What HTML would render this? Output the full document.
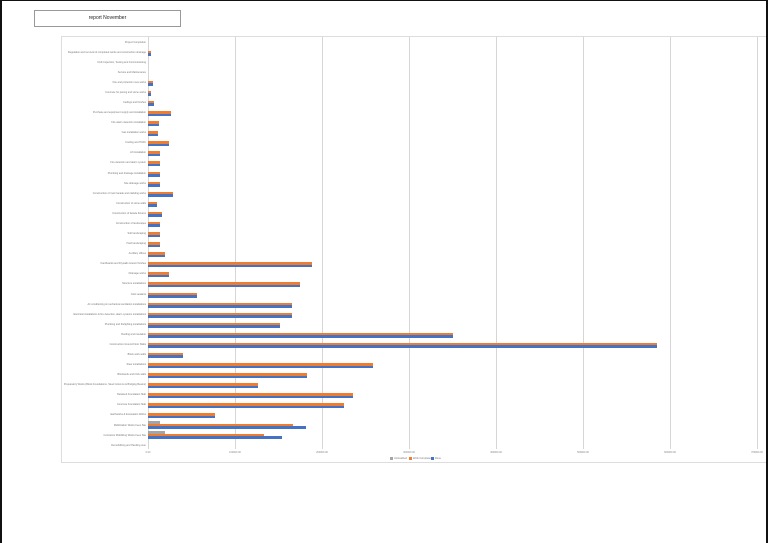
<!DOCTYPE html>
<html><head><meta charset="utf-8"><style>
html,body{margin:0;padding:0;background:#fff;}
body{width:768px;height:543px;position:relative;overflow:hidden;font-family:"Liberation Sans",sans-serif;}
.frame{position:absolute;left:0;top:0;width:768px;height:543px;border-left:2px solid #111;border-top:1px solid #111;border-right:2px solid #111;box-sizing:border-box;}
.title{position:absolute;left:34px;top:10px;width:145px;height:15px;border:1px solid #999;font-size:5px;text-align:center;line-height:15px;color:#222;}
.chart{position:absolute;left:61px;top:36px;width:705px;height:427px;border:1px solid #ddd;border-right:none;box-sizing:border-box;}
.g{position:absolute;top:37px;height:412px;width:1px;background:#d6d6d6;}
.ax{position:absolute;top:451px;font-size:2.5px;color:#888;width:30px;margin-left:-15px;text-align:center;}
.lb{position:absolute;right:622px;font-size:2.5px;color:#777;white-space:nowrap;}
.b{position:absolute;left:148px;height:2.5px;}
.o{background:#ed7d31;}.bl{background:#4472c4;}.gr{background:#a5a5a5;}
.lg{position:absolute;top:457px;font-size:2.5px;color:#777;}
.lg i{display:inline-block;width:3px;height:3px;margin-right:1px;vertical-align:middle;}
</style></head><body>
<div class="frame"></div>
<div class="title">report November</div>
<div class="chart"></div>
<div id="c"></div>
<div class="lg" style="left:390px"><i style="background:#a5a5a5"></i>Unlocalized</div>
<div class="lg" style="left:409px"><i style="background:#ed7d31"></i>Work Completed</div>
<div class="lg" style="left:431px"><i style="background:#4472c4"></i>Done</div>
<script>
var c=document.getElementById('c'),h='';
var gx=[148,235,322,409,496,583,670,757],al=['0.00','100000.00','200000.00','300000.00','400000.00','500000.00','600000.00','700000.00'];
gx.forEach(function(x,i){h+='<div class="g" style="left:'+x+'px"></div><div class="ax" style="left:'+x+'px">'+al[i]+'</div>';});
var v=[0,151,0,0,153,151,154,171,159,158,169,160,160,160,160,173,157,162,160,160,160,165,312,169,300,197,292,292,280,453,657,183,373,307,258,353,344,215,[293,306,160],[264,282,165],0];
var L=['Project Completion','Regulation and removal of completed works and construction drainage','Civil Inspection, Testing and Commissioning','Service and Maintenance','Fire and protection new works','Concrete for paving and stone works','Ceilings and finishes','Purchase and equipment supply and installation','Fire alarm detection installation','Gas installation works','Cooling and HVAC','Lift installation','Fire detection and alarm system','Plumbing and drainage installation','Site drainage works','Construction of main facade and cladding works','Construction of stone walls','Construction of facade fixtures','Construction of landscapes','Soft landscaping','Hard landscaping','Ancillary offices','Cardboards and Drywalls interior finishes','Drainage works','Structure installations','Joint sealants','Air conditioning & mechanical ventilation installations','Electrical installations & fire detection, alarm systems installations','Plumbing and firefighting installations','Roofing and insulation','Construction Ground Floor Slabs','Block work walls','Steel installations','Blockwork and brick walls','Preparatory Works (Block Foundations, Steel Columns & Bridging Beams)','Retained Foundation Slab','Concrete Foundation Slab','Earthworks & Excavation Works','Mobilization Works Fees Site','Contractor Mobilizing Works Fees Site','Demobilizing and Handing over'];
for(var i=0;i<41;i++){var y=42+i*10.08;h+='<div class="lb" style="top:'+(y-1.5)+'px">'+L[i]+'</div>';var d=v[i];if(!d)continue;var o,b,g=0;if(d.length){o=d[0];b=d[1];g=d[2];}else{o=b=d;}
if(g){h+='<div class="b gr" style="top:'+(y-4)+'px;width:'+(g-148)+'px"></div>';}
h+='<div class="b o" style="top:'+(y-1.5)+'px;width:'+(o-148)+'px"></div><div class="b bl" style="top:'+(y+1)+'px;width:'+(b-148)+'px"></div>';}
c.innerHTML=h;
</script>
</body></html>
